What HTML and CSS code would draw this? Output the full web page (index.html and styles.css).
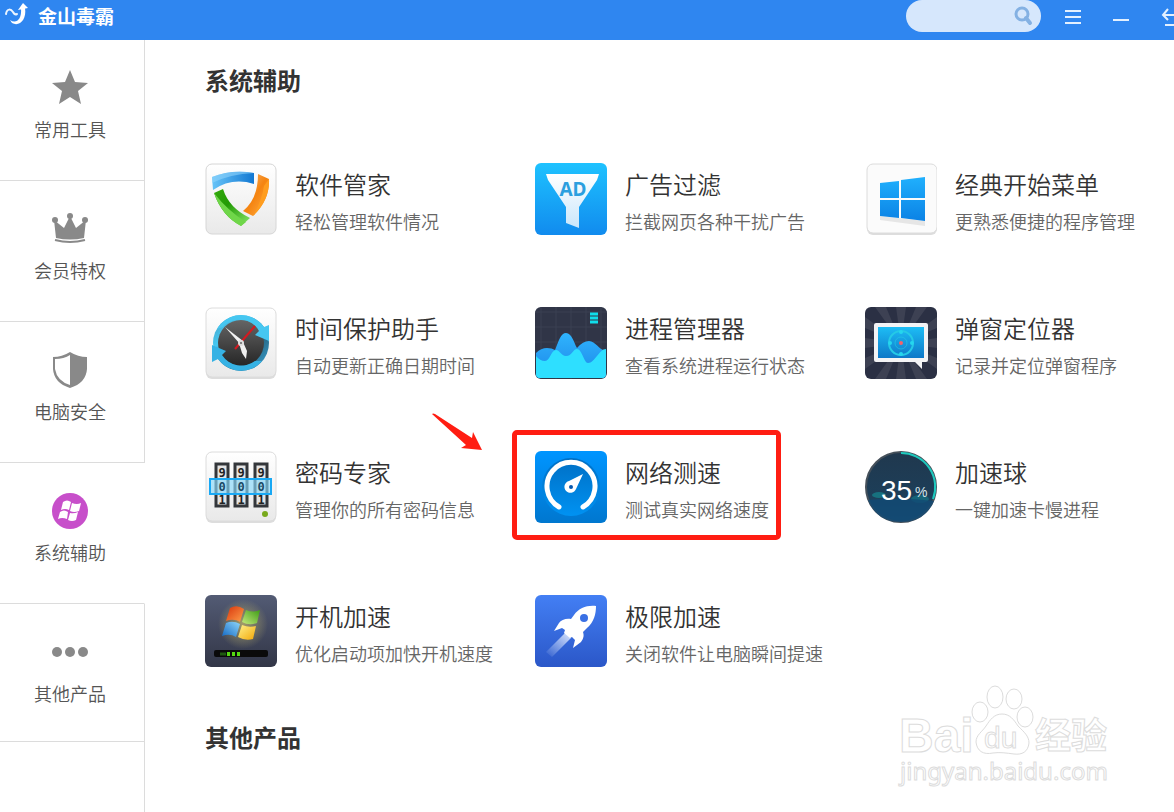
FILE: index.html
```html
<!DOCTYPE html>
<html lang="zh-CN">
<head>
<meta charset="UTF-8" />
<meta name="viewport" content="width=device-width, initial-scale=1" />
<title>金山毒霸</title>
<link rel="stylesheet" href="styles.css">
</head>
<body>
  <header class="topbar">
    <a class="brand" href="#">
      <svg width="26" height="26" viewBox="0 0 26 26" aria-hidden="true">
        <path d="M2 12C3 6 7 7 9 10C10 12 11 13 13 12" fill="none" stroke="#eaf4ff" stroke-width="2" stroke-linecap="round"/>
        <path d="M6 18C12 22 18 18 17 6L21 6C23 18 15 25 8 21Z" fill="#fff"/>
        <path d="M14 8L19 1L24 6Z" fill="#fff"/>
      </svg>
      <span>金山毒霸</span>
    </a>
    <div class="search">
      <input type="search" aria-label="搜索">
      <button type="button" aria-label="搜索">
        <svg width="20" height="20" viewBox="0 0 20 20"><circle cx="9" cy="8" r="6" fill="none" stroke="#84b1e3" stroke-width="3"/><path d="M13 12L17 17" stroke="#84b1e3" stroke-width="4" stroke-linecap="round"/></svg>
      </button>
    </div>
    <div class="window-buttons">
      <button type="button" aria-label="菜单">
        <svg width="16" height="16" viewBox="0 0 16 16"><path d="M0 2H16M0 8H16M0 14H16" stroke="#e3f0ff" stroke-width="2"/></svg>
      </button>
      <button type="button" aria-label="最小化">
        <svg width="16" height="16" viewBox="0 0 16 16"><path d="M0 11H16" stroke="#e3f0ff" stroke-width="2"/></svg>
      </button>
      <button type="button" aria-label="返回">
        <svg width="14" height="20" viewBox="0 0 14 20"><path d="M7 2L2 8L7 13M2 8H14M4 18H14" fill="none" stroke="#e3f0ff" stroke-width="2"/></svg>
      </button>
    </div>
  </header>

  <div class="layout">
    <nav class="sidebar">
      <a class="side-item" href="#">
        <svg width="36" height="36" viewBox="0 0 36 36"><path d="M18 0L23 12L36 13L26 21L29 34L18 27L7 34L10 21L0 13L13 12Z" fill="#898989"/></svg>
        <span>常用工具</span>
      </a>
      <a class="side-item" href="#">
        <svg width="36" height="36" viewBox="0 0 36 36"><g fill="#898989"><circle cx="18" cy="5" r="3"/><circle cx="3" cy="9" r="3"/><circle cx="33" cy="9" r="3"/><path d="M2 9L12 17L18 5L24 17L34 9L32 27Q18 30 4 27Z"/></g><path d="M3 29Q18 33 33 29" fill="none" stroke="#898989" stroke-width="2"/></svg>
        <span>会员特权</span>
      </a>
      <a class="side-item" href="#">
        <svg width="36" height="36" viewBox="0 0 36 36"><path d="M18 0Q26 5 35 5V17Q34 31 18 36Q2 31 1 17V5Q10 5 18 0Z" fill="#898989"/><path d="M18 3V33Q5 29 3 17V7Q12 7 18 3Z" fill="#fff"/></svg>
        <span>电脑安全</span>
      </a>
      <a class="side-item active" href="#">
        <svg width="36" height="36" viewBox="0 0 36 36"><circle cx="18" cy="18" r="18" fill="#c74fca"/><g fill="#fff"><path d="M11 9Q15 6 19 9L17 17Q13 15 9 17Z"/><path d="M20 10Q25 12 29 10L27 18Q22 20 18 18Z"/><path d="M8 19Q12 16 16 19L15 26Q10 24 6 26Z"/><path d="M18 20Q22 21 26 19L24 27Q20 29 16 27Z"/></g></svg>
        <span>系统辅助</span>
      </a>
      <a class="side-item last" href="#">
        <svg width="36" height="36" viewBox="0 0 36 36"><g fill="#898989"><circle cx="5" cy="18" r="5"/><circle cx="18" cy="18" r="5"/><circle cx="31" cy="18" r="5"/></g></svg>
        <span>其他产品</span>
      </a>
      <div class="side-rest"></div>
    </nav>

    <main class="content">
      <h2>系统辅助</h2>
      <div class="tools">
        <a class="tool" href="#">
          <svg class="tool-icon" viewBox="0 0 72 72">
            <defs>
              <linearGradient id="tile" x1="0" y1="0" x2="0" y2="1"><stop offset="0" stop-color="#fff"/><stop offset="1" stop-color="#e9e9e9"/></linearGradient>
              <linearGradient id="sBlue"><stop offset="0" stop-color="#68c4f8"/><stop offset="1" stop-color="#1278d2"/></linearGradient>
              <linearGradient id="sOrange" x1="0" y1="0" x2="1" y2="1"><stop offset="0" stop-color="#f7bd7b"/><stop offset=".5" stop-color="#f58410"/><stop offset="1" stop-color="#ffb04a"/></linearGradient>
              <linearGradient id="sGreen" x1="0" y1="0" x2="1" y2="1"><stop offset="0" stop-color="#35a90c"/><stop offset=".4" stop-color="#229a05"/><stop offset="1" stop-color="#8be86a"/></linearGradient>
            </defs>
            <rect x="1" y="1" width="70" height="70" rx="6" fill="url(#tile)" stroke="#d6d6d6"/>
            <path d="M7 14Q27 6 49 10V21Q27 14 8 27Z" fill="url(#sBlue)"/>
            <path d="M7 14Q27 6 49 10Q25 11 7 20Z" fill="#8fd4fb" opacity=".6"/>
            <path d="M53 11L64 16Q65 37 48 53L38 48Q53 36 53 11Z" fill="url(#sOrange)"/>
            <path d="M64 16Q65 37 48 53Q57 37 59 23Z" fill="#ff9d1e"/>
            <path d="M9 30L18 26Q24 45 45 55L36 63Q17 53 9 30Z" fill="url(#sGreen)"/>
            <path d="M9 30Q17 53 36 63L41 59Q23 48 9 30Z" fill="#6fd649"/>
          </svg>
          <span class="tool-text"><strong>软件管家</strong><small>轻松管理软件情况</small></span>
        </a>

        <a class="tool" href="#">
          <svg class="tool-icon" viewBox="0 0 72 72">
            <defs>
              <linearGradient id="adBg" x1="0" y1="0" x2="0" y2="1"><stop offset="0" stop-color="#1ec2ff"/><stop offset="1" stop-color="#118bee"/></linearGradient>
              <linearGradient id="adF" x1="0" y1="0" x2="0" y2="1"><stop offset="0" stop-color="#fff"/><stop offset="1" stop-color="#c9e6fb"/></linearGradient>
            </defs>
            <rect width="72" height="72" rx="6" fill="url(#adBg)"/>
            <path d="M11 11H64L62 17L44 44V65L31 60V44L13 17Z" fill="url(#adF)"/>
            <text x="38" y="33" class="ad-text">AD</text>
          </svg>
          <span class="tool-text"><strong>广告过滤</strong><small>拦截网页各种干扰广告</small></span>
        </a>

        <a class="tool" href="#">
          <svg class="tool-icon" viewBox="0 0 72 72">
            <defs><linearGradient id="win" gradientUnits="userSpaceOnUse" x1="0" y1="14" x2="0" y2="58"><stop offset="0" stop-color="#20b0fd"/><stop offset="1" stop-color="#0b82e5"/></linearGradient></defs>
            <rect x="2" y="2" width="70" height="70" rx="6" fill="#ddd"/>
            <rect x="2" y="1" width="70" height="69" rx="6" fill="#fbfbfb" stroke="#dcdcdc"/>
            <path d="M15 57L60 63V58L15 53Z" fill="#e6e6e6"/>
            <path d="M15 20L34 18V35H15ZM36 17L60 14V35H36ZM15 37H34V55L15 53ZM36 37H60V58L36 55Z" fill="url(#win)"/>
          </svg>
          <span class="tool-text"><strong>经典开始菜单</strong><small>更熟悉便捷的程序管理</small></span>
        </a>

        <a class="tool" href="#">
          <svg class="tool-icon" viewBox="0 0 72 72">
            <defs>
              <linearGradient id="clock" x1="0" y1="0" x2="0" y2="1"><stop offset="0" stop-color="#656565"/><stop offset="1" stop-color="#262626"/></linearGradient>
              <linearGradient id="ring" x1="0" y1="0" x2="1" y2="1"><stop offset="0" stop-color="#4a9dbe"/><stop offset=".3" stop-color="#45c8f2"/><stop offset=".6" stop-color="#26607a"/><stop offset="1" stop-color="#3aa6d8"/></linearGradient>
            </defs>
            <rect x="1" y="2" width="70" height="70" rx="6" fill="#ddd"/>
            <rect x="1" y="1" width="70" height="69" rx="6" fill="url(#tile)" stroke="#dcdcdc"/>
            <circle cx="36" cy="36" r="28" fill="url(#ring)"/>
            <circle cx="36" cy="36" r="23" fill="url(#clock)"/>
            <path d="M12 22A28 28 0 0 1 59 20L64 18V34L50 28L54 24A22 22 0 0 0 18 20Z" fill="#46c7f1"/>
            <path d="M57 54A28 28 0 0 1 13 52L7 55V38L21 44L17 48A23 23 0 0 0 50 54Z" fill="#36b2e4"/>
            <path d="M50 19L30 42" stroke="#d51920" stroke-width="2"/>
            <path d="M20 20L38 34L35 37ZM34 36L38 35L42 44L41 52L37 46Z" fill="#f1f1f1"/>
            <circle cx="36" cy="36" r="3" fill="#ddd"/><circle cx="36" cy="36" r="1" fill="#666"/>
          </svg>
          <span class="tool-text"><strong>时间保护助手</strong><small>自动更新正确日期时间</small></span>
        </a>

        <a class="tool" href="#">
          <svg class="tool-icon" viewBox="0 0 72 72">
            <defs><linearGradient id="wave" x1="0" y1="0" x2="0" y2="1"><stop offset="0" stop-color="#2fb4fd"/><stop offset="1" stop-color="#1d86e8"/></linearGradient></defs>
            <rect width="72" height="72" rx="6" fill="#303547"/>
            <path d="M6 0V72M21 0V72M36 0V72M51 0V72M66 0V72M0 5H72M0 20H72M0 35H72" stroke="#3b4052"/>
            <path d="M55 7H63M55 11H63M55 15H63" stroke="#10ddea" stroke-width="3"/>
            <path d="M1 46Q6 41 12 41Q17 41 20 43C24 33 26 26 31 26C37 26 39 36 42 41Q48 34 54 34C61 34 65 45 71 43V67Q71 71 67 71H5Q1 71 1 67Z" fill="url(#wave)"/>
            <path d="M1 49Q5 54 10 54C15 54 16 43 21 43C25 43 26 49 31 49C37 49 38 42 42 42C47 42 49 56 53 56C60 56 64 42 71 42V67Q71 71 67 71H5Q1 71 1 67Z" fill="#2edfff"/>
          </svg>
          <span class="tool-text"><strong>进程管理器</strong><small>查看系统进程运行状态</small></span>
        </a>

        <a class="tool" href="#">
          <svg class="tool-icon" viewBox="0 0 72 72">
            <defs><linearGradient id="scr" x1="0" y1="0" x2="0" y2="1"><stop offset="0" stop-color="#1dbdf5"/><stop offset="1" stop-color="#0e78c8"/></linearGradient></defs>
            <rect width="72" height="72" rx="6" fill="#2b3044"/>
            <path d="M36 36L31 0H41ZM36 36L10 0H21ZM36 36L51 0H62ZM36 36L0 10V21ZM36 36L72 10V21ZM36 36L0 31V41ZM36 36L72 31V41ZM36 36L0 51V62ZM36 36L72 51V62ZM36 36L10 72H21ZM36 36L31 72H41ZM36 36L51 72H62Z" fill="#3d4153"/>
            <path d="M11 16H61Q63 16 63 18V53Q63 55 61 55H57V62L50 55H11Q9 55 9 53V18Q9 16 11 16Z" fill="#f3f3f5"/>
            <rect x="13" y="20" width="46" height="31" fill="url(#scr)"/>
            <g fill="none" stroke="#25c9e6"><circle cx="36" cy="36" r="12" stroke-width="2"/><circle cx="36" cy="36" r="6" opacity=".6"/></g>
            <g fill="#25d6ee"><circle cx="36" cy="25" r="2"/><circle cx="36" cy="47" r="2"/><circle cx="25" cy="36" r="2"/><circle cx="47" cy="36" r="2"/></g>
            <circle cx="36" cy="36" r="2" fill="#f4636a"/>
          </svg>
          <span class="tool-text"><strong>弹窗定位器</strong><small>记录并定位弹窗程序</small></span>
        </a>

        <a class="tool" href="#">
          <svg class="tool-icon" viewBox="0 0 72 72">
            <rect x="1" y="2" width="70" height="70" rx="6" fill="#ddd"/>
            <rect x="1" y="1" width="70" height="69" rx="6" fill="url(#tile)" stroke="#dcdcdc"/>
            <g fill="#e4e4e4" stroke="#33363a" stroke-width="3"><rect x="11" y="13" width="12" height="42"/><rect x="30" y="13" width="12" height="42"/><rect x="50" y="13" width="12" height="42"/></g>
            <g class="lock-digits">
              <text x="17" y="26">9</text><text x="36" y="26">9</text><text x="56" y="26">9</text>
              <text x="17" y="53">1</text><text x="36" y="53">1</text><text x="56" y="53">1</text>
            </g>
            <rect x="5" y="28" width="61" height="15" fill="#87d8fb" fill-opacity=".65" stroke="#18a8f4" stroke-width="2"/>
            <g class="lock-digits middle"><text x="17" y="40">0</text><text x="36" y="40">0</text><text x="56" y="40">0</text></g>
            <circle cx="60" cy="63" r="3" fill="#78a91c"/>
          </svg>
          <span class="tool-text"><strong>密码专家</strong><small>管理你的所有密码信息</small></span>
        </a>

        <a class="tool marked" href="#">
          <svg class="tool-icon" viewBox="0 0 72 72">
            <defs>
              <linearGradient id="spBg" x1="0" y1="0" x2="0" y2="1"><stop offset="0" stop-color="#0095ff"/><stop offset="1" stop-color="#0077cf"/></linearGradient>
              <linearGradient id="spIn" x1="0" y1="0" x2="0" y2="1"><stop offset="0" stop-color="#006fc4"/><stop offset="1" stop-color="#0092f2"/></linearGradient>
            </defs>
            <rect width="72" height="72" rx="6" fill="url(#spBg)"/>
            <circle cx="36" cy="36" r="29" fill="url(#spIn)"/>
            <path d="M24 56A24 24 0 1 1 48 56" fill="none" stroke="#fff" stroke-width="5" stroke-linecap="round"/>
            <path d="M48 23L41 38A6 6 0 1 1 34 30Z" fill="#fff"/><circle cx="36" cy="36" r="2" fill="#0757ae"/>
          </svg>
          <span class="tool-text"><strong>网络测速</strong><small>测试真实网络速度</small></span>
          <span class="mark-box"></span>
          <svg class="mark-arrow" viewBox="0 0 50 40"><path d="M0 1Q1 0 3 1L40 25L41 19L50 37L29 35L34 32Z" fill="#ff1d12"/></svg>
        </a>

        <a class="tool" href="#">
          <svg class="tool-icon" viewBox="0 0 72 72">
            <defs><linearGradient id="ball" x1="0" y1="0" x2="0" y2="1"><stop offset="0" stop-color="#20384e"/><stop offset=".6" stop-color="#1d3e58"/><stop offset="1" stop-color="#1b4c72"/></linearGradient></defs>
            <circle cx="36" cy="36" r="35" fill="url(#ball)" stroke="#45505a" stroke-width="2"/>
            <ellipse cx="14" cy="44" rx="7" ry="3" fill="#17717f"/><ellipse cx="55" cy="48" rx="9" ry="4" fill="#176478"/>
            <path d="M3 49Q36 46 69 50Q60 71 36 71Q12 71 3 49Z" fill="#124a74" opacity=".8"/>
            <path d="M36 2A34 34 0 0 1 68 48" fill="none" stroke="#1ec9bd" stroke-width="2"/>
            <text x="16" y="49" class="ball-num">35</text><text x="50" y="46" class="ball-pct">%</text>
          </svg>
          <span class="tool-text"><strong>加速球</strong><small>一键加速卡慢进程</small></span>
        </a>

        <a class="tool" href="#">
          <svg class="tool-icon" viewBox="0 0 72 72">
            <defs>
              <linearGradient id="bootBg" x1="0" y1="0" x2="0" y2="1"><stop offset="0" stop-color="#535b74"/><stop offset="1" stop-color="#323647"/></linearGradient>
              <radialGradient id="glow"><stop offset="0" stop-color="#b9b06a" stop-opacity=".8"/><stop offset="1" stop-color="#b9b06a" stop-opacity="0"/></radialGradient>
              <linearGradient id="fR" x1="0" y1="0" x2="1" y2="1"><stop offset="0" stop-color="#d8340c"/><stop offset="1" stop-color="#ffa04a"/></linearGradient>
              <linearGradient id="fG" x1="1" y1="0" x2="0" y2="1"><stop offset="0" stop-color="#3d9a16"/><stop offset="1" stop-color="#c4ea7c"/></linearGradient>
              <linearGradient id="fB" x1="0" y1="1" x2="1" y2="0"><stop offset="0" stop-color="#1268c4"/><stop offset="1" stop-color="#8fd6fa"/></linearGradient>
              <linearGradient id="fY" x1="0" y1="0" x2="1" y2="1"><stop offset="0" stop-color="#fff08a"/><stop offset="1" stop-color="#f2a808"/></linearGradient>
            </defs>
            <rect width="72" height="72" rx="6" fill="url(#bootBg)"/>
            <circle cx="38" cy="29" r="25" fill="url(#glow)"/>
            <path d="M25 13Q32 9 39 14L35 27Q29 23 21 26Z" fill="url(#fR)"/>
            <path d="M41 15Q48 18 55 15L52 28Q44 31 37 27Z" fill="url(#fG)"/>
            <path d="M21 28Q28 25 35 29L31 42Q25 38 17 41Z" fill="url(#fB)"/>
            <path d="M37 30Q44 33 51 31L48 44Q40 46 33 42Z" fill="url(#fY)"/>
            <rect x="9" y="55" width="54" height="7" rx="2" fill="#0a0a0a"/>
            <path d="M15 59H21" stroke="#1f5a10" stroke-width="3"/><path d="M22 59H25M27 59H30M32 59H35" stroke="#56d812" stroke-width="4"/>
          </svg>
          <span class="tool-text"><strong>开机加速</strong><small>优化启动项加快开机速度</small></span>
        </a>

        <a class="tool" href="#">
          <svg class="tool-icon" viewBox="0 0 72 72">
            <defs>
              <linearGradient id="rkBg" x1="0" y1="0" x2="0" y2="1"><stop offset="0" stop-color="#437ff4"/><stop offset="1" stop-color="#2b57c8"/></linearGradient>
              <linearGradient id="rkF" x1="1" y1="0" x2="0" y2="1"><stop offset="0" stop-color="#d9e4fb"/><stop offset="1" stop-color="#d9e4fb" stop-opacity="0"/></linearGradient>
            </defs>
            <rect width="72" height="72" rx="6" fill="url(#rkBg)"/>
            <path d="M30 38L36 43L17 62L11 57Z" fill="url(#rkF)"/>
            <path d="M61 11C52 10 44 13 39 20L36 24C31 23 26 25 24 28L19 36L27 33L30 35L29 38L35 43L37 42L40 45L38 53L46 47C49 43 49 40 48 37L52 33C59 27 61 19 61 11Z" fill="#fff"/>
            <circle cx="49" cy="23" r="4" fill="#3a70e4"/>
          </svg>
          <span class="tool-text"><strong>极限加速</strong><small>关闭软件让电脑瞬间提速</small></span>
        </a>
      </div>
      <h2>其他产品</h2>
    </main>
  </div>

  <svg class="watermark" viewBox="0 0 260 130" aria-hidden="true">
    <text x="19" y="82" class="wm-big">Bai</text>
    <g class="wm-shape">
      <ellipse cx="100" cy="42" rx="8" ry="10"/><ellipse cx="115" cy="27" rx="8" ry="11"/><ellipse cx="134" cy="29" rx="8" ry="10"/><ellipse cx="145" cy="47" rx="8" ry="10"/>
      <path d="M122 44C130 44 134 50 138 56C144 62 149 66 149 73C148 82 142 85 134 84C126 83 120 82 113 83C103 85 97 81 96 72C96 65 102 62 106 56C110 50 114 44 122 44Z"/>
    </g>
    <text x="104" y="78" class="wm-du">du</text>
    <text x="155" y="79" class="wm-cn">经验</text>
    <text x="20" y="110" class="wm-url">jingyan.baidu.com</text>
  </svg>
</body>
</html>
```

FILE: styles.css
```css
* {
  box-sizing: border-box;
}
body {
  margin: 0;
  min-height: 100vh;
  display: flex;
  flex-direction: column;
  position: relative;
  background: #fff;
  color: #333;
  font-family: "Noto Sans CJK SC", "Noto Sans", sans-serif;
}
a {
  color: inherit;
  text-decoration: none;
}
button {
  display: flex;
  padding: 0;
  border: none;
  background: none;
  cursor: pointer;
}

/* top bar */
.topbar {
  display: flex;
  align-items: flex-start;
  height: 40px;
  background: #2f86f0;
  color: #fff;
}
.brand {
  display: flex;
  align-items: center;
  gap: 8px;
  height: 30px;
  padding-left: 4px;
  margin-right: auto;
  font-size: 19px;
  font-weight: 700;
}
.search {
  display: flex;
  align-items: center;
  width: 135px;
  height: 32px;
  padding: 0 8px 0 16px;
  border-radius: 16px;
  background: #d6e7fc;
}
.search input {
  flex: 1;
  min-width: 0;
  border: none;
  outline: none;
  background: transparent;
}
.window-buttons {
  display: flex;
  align-items: center;
  gap: 32px;
  height: 34px;
  padding-left: 24px;
  margin-right: -1px;
}

.layout {
  flex: 1;
  display: flex;
}

/* sidebar */
.sidebar {
  display: flex;
  flex-direction: column;
  flex: 0 0 145px;
}
.side-item {
  display: flex;
  flex-direction: column;
  align-items: center;
  gap: 11px;
  padding: 30px 4px 39px 0;
  border-right: 1px solid #dcdcdc;
  border-bottom: 1px solid #dcdcdc;
  color: #555;
  font-size: 18px;
  font-weight: 350;
  line-height: 24px;
}
.side-item.active {
  border-right-color: transparent;
}
.side-item.last {
  padding-bottom: 36px;
}
.side-rest {
  flex: 1;
  border-right: 1px solid #dcdcdc;
}

/* content */
.content {
  flex: 1;
  padding: 22px 0 0 60px;
}
h2 {
  margin: 0;
  font-size: 24px;
  font-weight: 700;
  line-height: 36px;
}
.tools {
  display: grid;
  grid-template-columns: repeat(3, 1fr);
  justify-items: start;
  gap: 72px 21px;
  margin: 65px 0 52px;
}
.tool {
  display: flex;
  gap: 18px;
  position: relative;
}
.tool-icon {
  flex: none;
  width: 72px;
  height: 72px;
}
.tool-text {
  display: flex;
  flex-direction: column;
  gap: 8px;
  padding-top: 5px;
  white-space: nowrap;
}
.tool-text strong {
  font-size: 24px;
  font-weight: 350;
  line-height: 32px;
}
.tool-text small {
  color: #666;
  font-size: 18px;
  font-weight: 350;
  line-height: 26px;
}
.mark-box {
  position: absolute;
  inset: -21px -12px -17px -23px;
  border: 5px solid #ff1d12;
  border-radius: 5px;
}
.mark-arrow {
  position: absolute;
  left: -103px;
  top: -38px;
  width: 50px;
  height: 40px;
}

/* text inside icons */
.ad-text {
  font: 700 19px "Noto Sans", sans-serif;
  fill: #2b9fdf;
  text-anchor: middle;
}
.lock-digits {
  font: 700 12px "DejaVu Sans Mono", monospace;
  fill: #222;
  text-anchor: middle;
}
.lock-digits.middle {
  fill: #1c4a66;
}
.ball-num {
  font: 400 28px "Liberation Sans", sans-serif;
  fill: #fff;
}
.ball-pct {
  font: 400 14px "Liberation Sans", sans-serif;
  fill: #d5e3ea;
}

/* watermark */
.watermark {
  position: absolute;
  right: 34px;
  bottom: 12px;
  width: 260px;
  height: 130px;
  pointer-events: none;
  fill: #fff;
  stroke: #dcdcdc;
}
.wm-big {
  font: 700 48px "Liberation Sans", sans-serif;
}
.wm-du {
  font: 400 30px "Liberation Sans", sans-serif;
}
.wm-cn {
  font: 700 36px "Noto Sans CJK SC", sans-serif;
}
.wm-url {
  font: 400 24px "Noto Sans", sans-serif;
}
```
